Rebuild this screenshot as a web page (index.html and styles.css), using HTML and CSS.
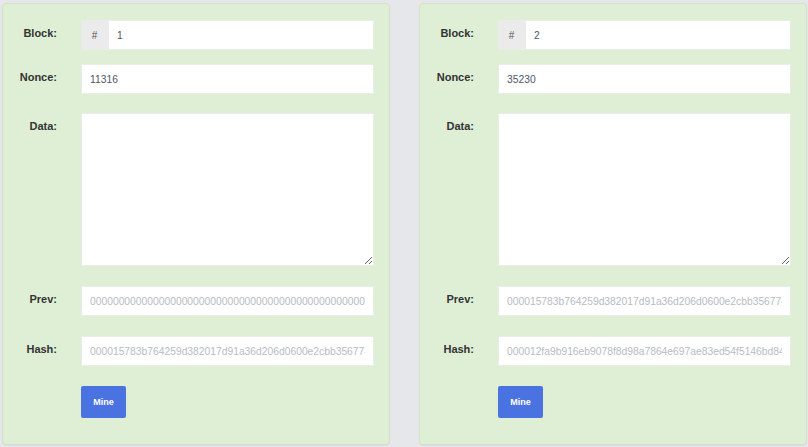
FILE: index.html
```html
<!DOCTYPE html>
<html>
<head>
<meta charset="utf-8">
<link rel="stylesheet" href="styles.css">
</head>
<body>
<div class="blocks">
  <div class="card">
    <div class="row row-block">
      <label class="lbl">Block:</label>
      <div class="group"><span class="addon">#</span><input class="field" type="text" value="1"></div>
    </div>
    <div class="row row-nonce">
      <label class="lbl">Nonce:</label>
      <input class="field" type="text" value="11316">
    </div>
    <div class="row">
      <label class="lbl">Data:</label>
      <textarea class="field area"></textarea>
    </div>
    <div class="row">
      <label class="lbl">Prev:</label>
      <input class="field muted" type="text" readonly value="0000000000000000000000000000000000000000000000000000000000000000">
    </div>
    <div class="row">
      <label class="lbl">Hash:</label>
      <input class="field muted" type="text" readonly value="000015783b764259d382017d91a36d206d0600e2cbb3567748f46ba44eb37e21">
    </div>
    <div class="row">
      <span></span>
      <div><button class="btn">Mine</button></div>
    </div>
  </div>
  <div class="card">
    <div class="row row-block">
      <label class="lbl">Block:</label>
      <div class="group"><span class="addon">#</span><input class="field" type="text" value="2"></div>
    </div>
    <div class="row row-nonce">
      <label class="lbl">Nonce:</label>
      <input class="field" type="text" value="35230">
    </div>
    <div class="row">
      <label class="lbl">Data:</label>
      <textarea class="field area"></textarea>
    </div>
    <div class="row">
      <label class="lbl">Prev:</label>
      <input class="field muted" type="text" readonly value="000015783b764259d382017d91a36d206d0600e2cbb3567748f46ba44eb37e21">
    </div>
    <div class="row">
      <label class="lbl">Hash:</label>
      <input class="field muted" type="text" readonly value="000012fa9b916eb9078f8d98a7864e697ae83ed54f5146bd84452e2fc1d8a1c6">
    </div>
    <div class="row">
      <span></span>
      <div><button class="btn">Mine</button></div>
    </div>
  </div>
</div>
</body>
</html>
```

FILE: styles.css
```css
html, body {
  margin: 0;
  padding: 0;
}
body {
  background: #e6e7eb;
  font-family: "Liberation Sans", Arial, sans-serif;
  width: 808px;
  height: 447px;
  overflow: hidden;
}
.blocks {
  display: flex;
  gap: 29px;
  padding: 3px 1px 0 2px;
}
.card {
  box-sizing: border-box;
  width: 388px;
  height: 442px;
  background: #dfefd5;
  border: 1px solid #d3e2c9;
  border-radius: 4px;
  padding-top: 16px;
  box-shadow: 0 1px 1px rgba(0,0,0,0.04);
}
.row {
  display: grid;
  grid-template-columns: 54px 293px;
  column-gap: 24px;
  margin-bottom: 20px;
}
.row-block {
  margin-bottom: 14px;
}
.row-nonce {
  margin-bottom: 19px;
}
.lbl {
  text-align: right;
  font-size: 11px;
  font-weight: bold;
  color: #333;
  line-height: 15px;
  padding-top: 6px;
}
.group {
  display: flex;
  height: 30px;
}
.addon {
  width: 27px;
  flex: none;
  background: #ebebeb;
  color: #555;
  font-size: 10px;
  display: flex;
  align-items: center;
  justify-content: center;
  border-radius: 2px 0 0 2px;
}
.field {
  box-sizing: border-box;
  height: 30px;
  width: 100%;
  min-width: 0;
  margin: 0;
  border: 1px solid #ebede8;
  background: #fff;
  padding: 0 8px;
  font-family: "Liberation Sans", Arial, sans-serif;
  font-size: 10.3px;
  color: #4f5566;
  outline: none;
  border-radius: 0;
}
.area {
  height: 153px;
  resize: vertical;
  padding: 6px 8px;
  display: block;
}
.muted {
  color: #b7bbc3;
}
.btn {
  width: 45px;
  height: 32px;
  border: none;
  border-radius: 2px;
  background: #4a72e0;
  color: #fff;
  font-family: "Liberation Sans", Arial, sans-serif;
  font-size: 9px;
  font-weight: bold;
  padding: 0;
  cursor: pointer;
}
```
